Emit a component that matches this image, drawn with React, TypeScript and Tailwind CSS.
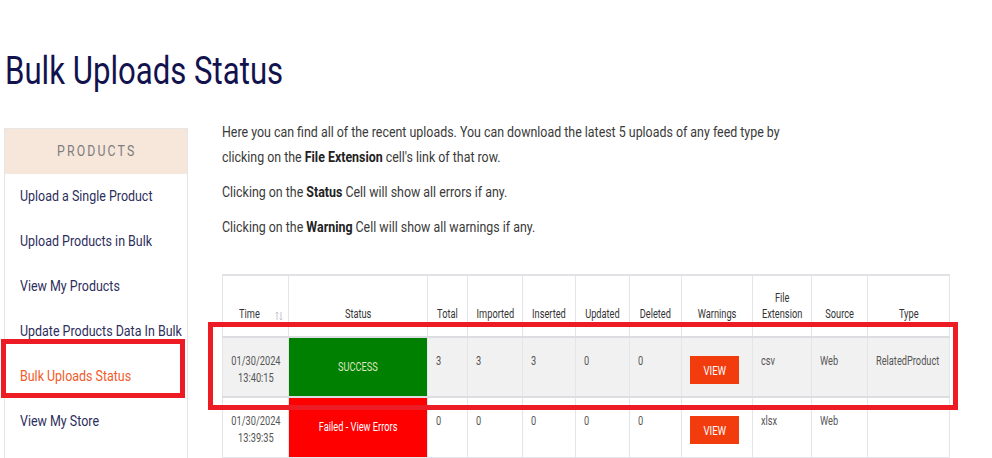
import React from "react";

const font = "font-['Roboto','Liberation_Sans',sans-serif]";

const sideItems = [
  "Upload a Single Product",
  "Upload Products in Bulk",
  "View My Products",
  "Update Products Data In Bulk",
  "Bulk Uploads Status",
  "View My Store",
];

function L({ children }: { children: React.ReactNode }) {
  return <span className="inline-block whitespace-nowrap origin-left scale-x-[0.77]">{children}</span>;
}
function C({ children }: { children: React.ReactNode }) {
  return <span className="inline-block whitespace-nowrap origin-center scale-x-[0.77]">{children}</span>;
}

function SortIcon() {
  return (
    <svg width="8" height="10" viewBox="0 0 8 10" className="absolute right-[5px] bottom-[15px]">
      <path d="M2 9V1M0.5 2.5L2 1l1.5 1.5" stroke="#c3c7cf" strokeWidth="1" fill="none" />
      <path d="M6 1v8M4.5 7.5L6 9l1.5-1.5" stroke="#c3c7cf" strokeWidth="1" fill="none" />
    </svg>
  );
}

function ViewBtn() {
  return (
    <div className="mt-[3px] w-[49px] h-[28px] bg-[#f33c0e] text-white text-[12.5px] flex items-center justify-center">
      <C>VIEW</C>
    </div>
  );
}

export default function App() {
  const th = "border border-[#e3e5e9] font-normal text-[12px] leading-[16px] text-[#333] align-bottom pb-[14px] text-center";
  const tdBase = "border border-[#e3e5e9] text-[12px] leading-[17px] text-[#555] align-top pt-[15px]";
  const td = `${tdBase} pl-[8px]`;
  const rows = [
    {
      date: "01/30/2024",
      time: "13:40:15",
      ok: true,
      nums: ["3", "3", "3", "0", "0"],
      ext: "csv",
      src: "Web",
      type: "RelatedProduct",
      bg: "bg-[#f1f1f1]",
    },
    {
      date: "01/30/2024",
      time: "13:39:35",
      ok: false,
      nums: ["0", "0", "0", "0", "0"],
      ext: "xlsx",
      src: "Web",
      type: "",
      bg: "bg-white",
    },
  ];
  const heads = ["Status", "Total", "Imported", "Inserted", "Updated", "Deleted", "Warnings"];
  return (
    <div className={`relative w-[992px] h-[458px] overflow-hidden bg-white ${font}`}>
      <h1 className="pl-[5px] pt-[49px] text-[38px] leading-[45px] font-normal text-[#12124e]">
        <span className="inline-block whitespace-nowrap origin-left scale-x-[0.82]">Bulk Uploads Status</span>
      </h1>
      <div className="flex mt-[26px] pl-[4px]">
        <aside className="w-[184px] h-[400px] mt-[8px] border border-[#e6e6e6] border-b-0 shrink-0">
          <div className="h-[45px] bg-[#f7e6da] flex items-center justify-center text-[15px] text-[#7d7d7d]">
            <span className="inline-block origin-center scale-x-[0.82] tracking-[2.6px] pl-[2.6px]">PRODUCTS</span>
          </div>
          {sideItems.map((s) => (
            <div
              key={s}
              className={`h-[45px] flex items-center pl-[15px] text-[15px] ${
                s === "Bulk Uploads Status" ? "text-[#f15a29]" : "text-[#2e2e5c]"
              }`}
            >
              <span className="inline-block whitespace-nowrap origin-left scale-x-[0.83]">{s}</span>
            </div>
          ))}
        </aside>
        <main className="ml-[34px] w-[727px] shrink-0">
          <div className="text-[15px] leading-[25px] text-[#3a3a3a] whitespace-nowrap origin-left scale-x-[0.827]">
            <p>
              Here you can find all of the recent uploads. You can download the latest 5 uploads of any feed type by
              <br />
              clicking on the <b className="font-bold text-[#222]">File Extension</b> cell's link of that row.
            </p>
            <p className="mt-[10px]">
              Clicking on the <b className="font-bold text-[#222]">Status</b> Cell will show all errors if any.
            </p>
            <p className="mt-[10px]">
              Clicking on the <b className="font-bold text-[#222]">Warning</b> Cell will show all warnings if any.
            </p>
          </div>
          <table className="mt-[34px] table-fixed border-collapse w-[727px] border-t-2 border-t-[#e0e2e6]">
            <colgroup>
              <col className="w-[66px]" />
              <col className="w-[139px]" />
              <col className="w-[40px]" />
              <col className="w-[55px]" />
              <col className="w-[53px]" />
              <col className="w-[54px]" />
              <col className="w-[52px]" />
              <col className="w-[71px]" />
              <col className="w-[59px]" />
              <col className="w-[56px]" />
              <col className="w-[82px]" />
            </colgroup>
            <thead>
              <tr className="h-[62px]">
                <th className={`${th} relative pr-[12px]`}>
                  <C>Time</C>
                  <SortIcon />
                </th>
                {heads.map((h) => (
                  <th key={h} className={th}>
                    <C>{h}</C>
                  </th>
                ))}
                <th className={th}>
                  <C>
                    File
                    <br />
                    Extension
                  </C>
                </th>
                <th className={th}>
                  <C>Source</C>
                </th>
                <th className={th}>
                  <C>Type</C>
                </th>
              </tr>
            </thead>
            <tbody>
              {rows.map((r, i) => (
                <tr
                  key={i}
                  className={`h-[60px] ${r.bg} ${
                    i === 0 ? "border-t-2 border-t-[#dcdde1] border-b-2 border-b-[#dcdde1]" : ""
                  }`}
                >
                  <td className={`${tdBase} text-center`}>
                    <C>
                      {r.date}
                      <br />
                      {r.time}
                    </C>
                  </td>
                  <td
                    className={`border border-[#e3e5e9] text-[12.5px] text-center align-middle ${
                      r.ok ? "bg-[#008000] text-[#dfe6c2]" : "bg-[#ff0000] text-white"
                    }`}
                  >
                    <span className="inline-block whitespace-nowrap origin-center scale-x-[0.74]">
                      {r.ok ? "SUCCESS" : "Failed - View Errors"}
                    </span>
                  </td>
                  {r.nums.map((n, j) => (
                    <td key={j} className={td}>
                      <L>{n}</L>
                    </td>
                  ))}
                  <td className={td}>
                    <ViewBtn />
                  </td>
                  <td className={td}>
                    <L>{r.ext}</L>
                  </td>
                  <td className={td}>
                    <L>{r.src}</L>
                  </td>
                  <td className={td}>
                    <L>{r.type}</L>
                  </td>
                </tr>
              ))}
            </tbody>
          </table>
        </main>
      </div>
      <div className="absolute left-[1px] top-[339px] w-[184px] h-[59px] border-[5px] border-[#ed1c24]" />
      <div className="absolute left-[208px] top-[322px] w-[750px] h-[88px] border-[5px] border-[#ed1c24]" />
    </div>
  );
}
